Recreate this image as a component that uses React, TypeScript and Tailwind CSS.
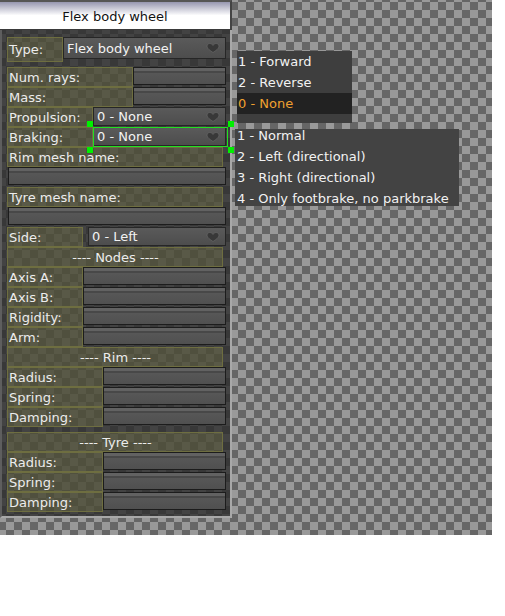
import React from 'react';

const checker =
    'bg-[conic-gradient(#999_0_25%,#666_0_50%,#999_0_75%,#666_0)] bg-[length:16px_16px] bg-[position:6px_2px]';
const labelBox =
    'h-[20px] shrink-0 flex items-center pl-[1px] border border-[#6e6e40] bg-[rgba(180,180,90,0.2)] text-[#ececec] whitespace-nowrap overflow-hidden';
const inputBox =
    'h-[18px] shrink-0 border border-[#1c1c1c] bg-[linear-gradient(to_bottom,#626262_0px,#626262_3px,#484848_3px,#484848_5px,#575757_5px,#505050_100%)]';
const comboBox =
    'shrink-0 flex items-center justify-between pl-[3px] pr-[5px] border border-[#262626] bg-[linear-gradient(to_bottom,#5a5a5a,#4d4d4d)] text-[#f2f2f2] whitespace-nowrap';

function Heart() {
    return (
        <svg width="14" height="10" viewBox="0 0 14 10">
            <path
                d="M7 9.5 C4 7.5 1 5.5 1 3.2 C1 1.4 2.4 0.5 3.8 0.5 C5.3 0.5 6.3 1.4 7 2.4 C7.7 1.4 8.7 0.5 10.2 0.5 C11.6 0.5 13 1.4 13 3.2 C13 5.5 10 7.5 7 9.5Z"
                fill="#383838"
                stroke="#646464"
                strokeWidth="0.8"
            />
        </svg>
    );
}

function Field({ label, labelW, inputW }: { label: string; labelW: string; inputW: string }) {
    return (
        <div className="flex h-[20px]">
            <div className={`${labelBox} ${labelW}`}>{label}</div>
            <div className={`${inputBox} ${inputW}`} />
        </div>
    );
}

function Header({ text }: { text: string }) {
    return (
        <div className={`${labelBox} w-[216px] justify-center`}>{text}</div>
    );
}

function Combo({ text, w, h }: { text: string; w: string; h: string }) {
    return (
        <div className={`${comboBox} ${w} ${h}`}>
            <span>{text}</span>
            <Heart />
        </div>
    );
}

export default function App() {
    return (
        <div className="font-['DejaVu_Sans',sans-serif] text-[13px] leading-none">
            <div className={`relative w-[492px] h-[535px] ${checker}`}>
                {/* editor window */}
                <div className="w-[232px] flex flex-col">
                    <div className="h-[30px] flex items-center justify-center pt-[2px] border-t-2 border-r-2 border-b border-t-[#555] border-r-[#444] border-b-[#3a3a3a] bg-[linear-gradient(to_bottom,#9696b0,#ffffff_50%)] text-[#111]">
                        Flex body wheel
                    </div>
                    <div className="flex flex-col pl-[5px] pr-[4px] pt-[7px] pb-[4px] border-l-2 border-r-2 border-b-2 border-l-[#5e5e5e] border-r-[#a8a8a8] border-b-[#a8a8a8] bg-[rgba(45,45,45,0.8)]">
                        <div className="flex h-[25px]">
                            <div className={`${labelBox} w-[56px] h-[25px]`}>Type:</div>
                            <Combo text="Flex body wheel" w="w-[163px]" h="h-[22px]" />
                        </div>
                        <div className="h-[5px]" />
                        <Field label="Num. rays:" labelW="w-[126px]" inputW="w-[93px]" />
                        <Field label="Mass:" labelW="w-[126px]" inputW="w-[93px]" />
                        <div className="flex h-[20px]">
                            <div className={`${labelBox} w-[86px]`}>Propulsion:</div>
                            <Combo text="0 - None" w="w-[133px]" h="h-[19px]" />
                        </div>
                        <div className="flex h-[20px]">
                            <div className={`${labelBox} w-[86px]`}>Braking:</div>
                            <Combo text="0 - None" w="w-[133px]" h="h-[19px]" />
                        </div>
                        <div className={`${labelBox} w-[216px]`}>Rim mesh name:</div>
                        <div className="h-[20px] pl-[1px]">
                            <div className={`${inputBox} w-[218px]`} />
                        </div>
                        <div className={`${labelBox} w-[216px]`}>Tyre mesh name:</div>
                        <div className="h-[20px] pl-[1px]">
                            <div className={`${inputBox} w-[218px]`} />
                        </div>
                        <div className="flex h-[20px] gap-[5px]">
                            <div className={`${labelBox} w-[76px]`}>Side:</div>
                            <Combo text="0 - Left" w="w-[138px]" h="h-[19px]" />
                        </div>
                        <Header text="---- Nodes ----" />
                        <Field label="Axis A:" labelW="w-[76px]" inputW="w-[143px]" />
                        <Field label="Axis B:" labelW="w-[76px]" inputW="w-[143px]" />
                        <Field label="Rigidity:" labelW="w-[76px]" inputW="w-[143px]" />
                        <Field label="Arm:" labelW="w-[76px]" inputW="w-[143px]" />
                        <Header text="---- Rim ----" />
                        <Field label="Radius:" labelW="w-[96px]" inputW="w-[123px]" />
                        <Field label="Spring:" labelW="w-[96px]" inputW="w-[123px]" />
                        <Field label="Damping:" labelW="w-[96px]" inputW="w-[123px]" />
                        <div className="h-[5px]" />
                        <Header text="---- Tyre ----" />
                        <Field label="Radius:" labelW="w-[96px]" inputW="w-[123px]" />
                        <Field label="Spring:" labelW="w-[96px]" inputW="w-[123px]" />
                        <Field label="Damping:" labelW="w-[96px]" inputW="w-[123px]" />
                    </div>
                </div>

                {/* selection on the braking combo */}
                <div className="absolute left-[93px] top-[127px] w-[135px] h-[20px] border border-[#22e022]" />
                <div className="absolute left-[87px] top-[121px] w-[6px] h-[6px] bg-[#00f000]" />
                <div className="absolute left-[228px] top-[121px] w-[6px] h-[6px] bg-[#00f000]" />
                <div className="absolute left-[87px] top-[147px] w-[6px] h-[6px] bg-[#00f000]" />
                <div className="absolute left-[228px] top-[147px] w-[6px] h-[6px] bg-[#00f000]" />

                {/* propulsion dropdown */}
                <div className="absolute left-[237px] top-[51px] w-[115px] h-[72px] bg-[#3e3e3e] text-[#f2f2f2]">
                    <div className="h-[21px] flex items-center pl-[1px]">1 - Forward</div>
                    <div className="h-[21px] flex items-center pl-[1px]">2 - Reverse</div>
                    <div className="h-[21px] flex items-center pl-[1px] bg-[#222] text-[#f0a030]">0 - None</div>
                </div>

                {/* braking dropdown */}
                <div className="absolute left-[235px] top-[129px] w-[224px] h-[77px] overflow-hidden bg-[#434343] text-[#f2f2f2]">
                    <div className="mt-[-4px]">
                        <div className="h-[21px] flex items-center pl-[2px]">1 - Normal</div>
                        <div className="h-[21px] flex items-center pl-[2px]">2 - Left (directional)</div>
                        <div className="h-[21px] flex items-center pl-[2px]">3 - Right (directional)</div>
                        <div className="h-[21px] flex items-center pl-[2px]">4 - Only footbrake, no parkbrake</div>
                    </div>
                </div>
            </div>
        </div>
    );
}
